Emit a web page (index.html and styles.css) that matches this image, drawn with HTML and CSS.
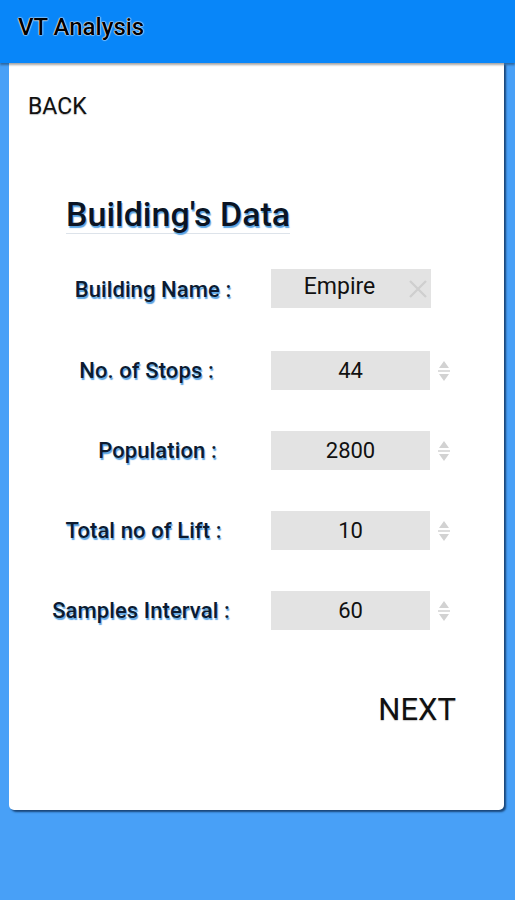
FILE: index.html
```html
<!DOCTYPE html>
<html>
<head>
  <link rel="stylesheet" href="styles.css">
</head>
<body>
  <div class="appbar">VT Analysis</div>

  <div class="card">
    <div class="back">BACK</div>
    <div class="title">Building's Data</div>

    <div class="form">
      <div class="label name">Building Name :</div>
      <div class="field text">
        <span>Empire</span>
        <svg class="clear" width="20" height="20" viewBox="0 0 20 20">
          <path d="M2 2 L18 18 M18 2 L2 18" stroke="#cfcfcf" stroke-width="2.4" fill="none"/>
        </svg>
      </div>
      <div></div>

      <div class="label stops">No. of Stops :</div>
      <div class="field">44</div>
      <svg class="spin" width="14" height="24" viewBox="0 0 14 24">
        <path d="M7 2 L12 9 L2 9 Z M2 15 L12 15 L7 22 Z" fill="#d2d2d2"/>
        <path d="M1 12 H13" stroke="#d2d2d2" stroke-width="1.5"/>
      </svg>

      <div class="label population">Population :</div>
      <div class="field">2800</div>
      <svg class="spin" width="14" height="24" viewBox="0 0 14 24">
        <path d="M7 2 L12 9 L2 9 Z M2 15 L12 15 L7 22 Z" fill="#d2d2d2"/>
        <path d="M1 12 H13" stroke="#d2d2d2" stroke-width="1.5"/>
      </svg>

      <div class="label lifts">Total no of Lift :</div>
      <div class="field">10</div>
      <svg class="spin" width="14" height="24" viewBox="0 0 14 24">
        <path d="M7 2 L12 9 L2 9 Z M2 15 L12 15 L7 22 Z" fill="#d2d2d2"/>
        <path d="M1 12 H13" stroke="#d2d2d2" stroke-width="1.5"/>
      </svg>

      <div class="label samples">Samples Interval :</div>
      <div class="field">60</div>
      <svg class="spin" width="14" height="24" viewBox="0 0 14 24">
        <path d="M7 2 L12 9 L2 9 Z M2 15 L12 15 L7 22 Z" fill="#d2d2d2"/>
        <path d="M1 12 H13" stroke="#d2d2d2" stroke-width="1.5"/>
      </svg>
    </div>

    <div class="actions">
      <div class="next">NEXT</div>
    </div>
  </div>
</body>
</html>
```

FILE: styles.css
```css
body {
  margin: 0;
  height: 900px;
  background: #48a0f7;
  font-family: Roboto, "Liberation Sans", sans-serif;
  overflow: hidden;
}
.appbar {
  height: 63px;
  box-sizing: border-box;
  padding: 13px 0 0 18px;
  background: #0886f9;
  color: #000;
  font-size: 24px;
  font-weight: 500;
  line-height: 28px;
  text-shadow: 0 0 1.5px #fff, 0 0 1.5px #fff, 0 0 1px #fff;
  box-shadow: 0 2px 2px rgba(0, 0, 0, 0.35);
  position: relative;
  z-index: 1;
}
.card {
  margin: 0 11px 0 9px;
  height: 747px;
  background: #fff;
  border-radius: 0 0 5px 5px;
  box-shadow: 2px 2px 2px rgba(10, 40, 80, 0.75);
  overflow: hidden;
}
.back {
  padding: 30px 0 0 19px;
  font-size: 23px;
  line-height: 27px;
  color: #111;
  text-shadow: 0 1px 1px rgba(0, 0, 0, 0.25);
}
.title {
  display: inline-block;
  margin: 76px 0 0 57px;
  font-size: 34px;
  line-height: 36px;
  font-weight: 500;
  color: #0b1424;
  text-shadow: 1px 2px 1px #5aa3e3;
  border-bottom: 1px solid #dde3ea;
  padding-bottom: 1px;
}
.form {
  display: grid;
  grid-template-columns: 232px 160px 20px;
  grid-template-rows: 41px repeat(4, 39px);
  row-gap: 41px;
  align-items: center;
  margin: 35px 0 0 30px;
}
.form .spin {
  margin-left: 6px;
}
.label {
  padding-right: 10px;
  text-align: center;
  font-size: 22px;
  font-weight: 500;
  letter-spacing: 0.1px;
  color: #0d1b30;
  text-shadow: 1px 2px 1px #5aa3e3;
}
/* labels in the app sit a little off a common centre */
.label.name { padding-right: 4px; }
.label.stops { padding-right: 17px; }
.label.population { padding: 0 0 0 5px; }
.label.lifts { padding-right: 23px; }
.label.samples { padding-right: 28px; }
.field {
  height: 39px;
  width: 159px;
  background: #e3e3e3;
  font-size: 22px;
  line-height: 39px;
  text-align: center;
  color: #111;
}
.field.text {
  display: flex;
  align-items: center;
  align-self: start;
  width: 160px;
}
.field.text span {
  flex: 1;
  font-size: 23px;
  line-height: 36px;
  align-self: flex-start;
}
.field .clear {
  margin-right: 3px;
}
.actions {
  display: flex;
  justify-content: flex-end;
  padding: 62px 48px 0 0;
}
.next {
  font-size: 31px;
  line-height: 36px;
  color: #111;
  text-shadow: 0 1px 1px rgba(0, 0, 0, 0.2);
}
```
